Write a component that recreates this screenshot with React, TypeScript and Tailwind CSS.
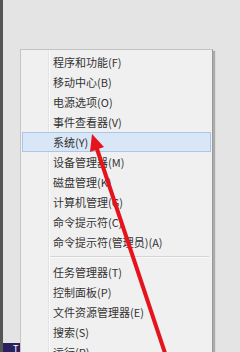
import React from "react";

type Item = { label: string; highlight?: boolean } | { sep: true };

const items: Item[] = [
  { label: "程序和功能(F)" },
  { label: "移动中心(B)" },
  { label: "电源选项(O)" },
  { label: "事件查看器(V)" },
  { label: "系统(Y)", highlight: true },
  { label: "设备管理器(M)" },
  { label: "磁盘管理(K)" },
  { label: "计算机管理(G)" },
  { label: "命令提示符(C)" },
  { label: "命令提示符(管理员)(A)" },
  { sep: true },
  { label: "任务管理器(T)" },
  { label: "控制面板(P)" },
  { label: "文件资源管理器(E)" },
  { label: "搜索(S)" },
  { label: "运行(R)" },
];

export default function App() {
  return (
    <div
      className="relative w-[240px] h-[352px] overflow-hidden bg-[#e4e4e4] flex"
      style={{ fontFamily: '"Noto Sans CJK SC", "Noto Sans", sans-serif' }}
    >
      <div className="w-[3px] h-full bg-[#555555] shrink-0" />
      <div className="flex flex-col w-[17px] shrink-0">
        <div className="flex-1" />
        <div className="h-[9px] bg-[#2b1f5e] text-white text-[9px] leading-[12px] pl-[10px] overflow-hidden">T</div>
      </div>
      <div className="pt-[49px] flex">
        <div className="w-[193px] h-[320px] bg-[#f0f0f0] border border-[#c4c4c4] border-r-[#9a9a9a] shadow-[2px_2px_1px_rgba(0,0,0,0.25)] relative pt-[2px] pl-[1px] pr-[1px]">
          <div className="absolute left-[27px] top-0 bottom-0 w-px bg-[#e3e3e3]" />
          <div className="absolute left-[28px] top-0 bottom-0 w-px bg-[#fbfbfb]" />
          {items.map((it, i) =>
            "sep" in it ? (
              <div key={i} className="h-[10px] flex flex-col justify-center pl-[28px] pr-[2px]">
                <div className="h-px bg-[#d4d4d4]" />
                <div className="h-px bg-[#fafafa]" />
              </div>
            ) : (
              <div
                key={i}
                className={
                  it.highlight
                    ? "relative h-[20px] flex items-center pl-[30px] bg-[#d9e6f5] border border-[#a9c7ea] text-[11px] text-[#2e2e2e]"
                    : "relative h-[20px] flex items-center pl-[31px] text-[11px] text-[#333333]"
                }
              >
                {it.label}
              </div>
            )
          )}
        </div>
      </div>
      <svg className="absolute left-0 top-0" width="240" height="352" viewBox="0 0 240 352">
        <line x1="166" y1="356" x2="96" y2="146" stroke="#e5141c" strokeWidth="4" />
        <polygon points="92,134 104,147 90,152" fill="#e5141c" />
      </svg>
    </div>
  );
}
